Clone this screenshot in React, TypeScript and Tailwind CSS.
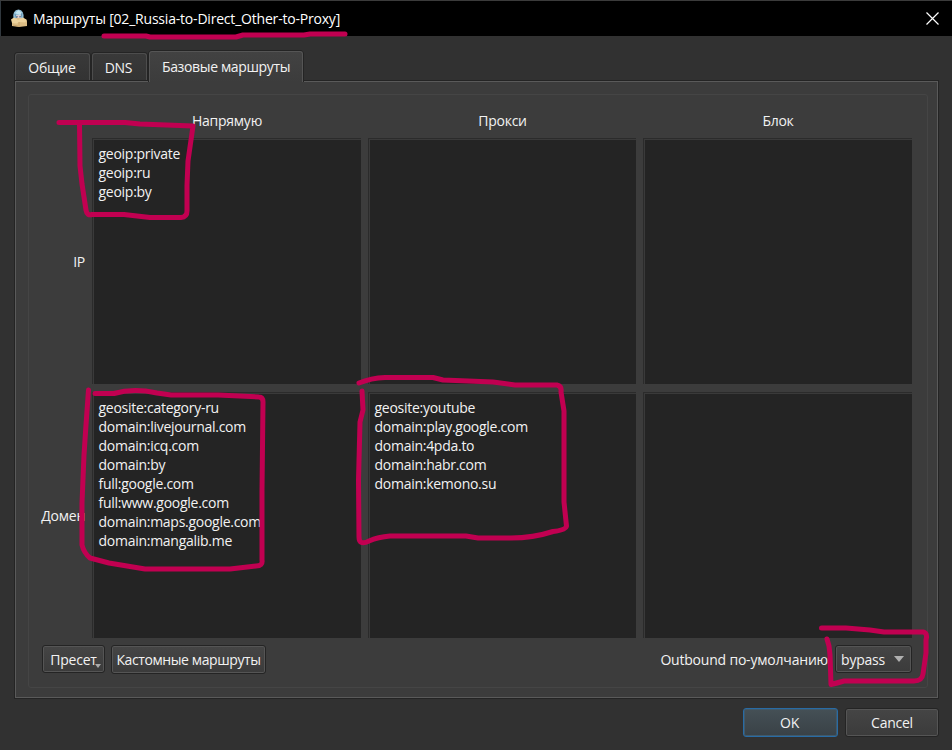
const direct = ["geoip:private", "geoip:ru", "geoip:by"];
const directDomains = [
  "geosite:category-ru",
  "domain:livejournal.com",
  "domain:icq.com",
  "domain:by",
  "full:google.com",
  "full:www.google.com",
  "domain:maps.google.com",
  "domain:mangalib.me",
];
const proxyDomains = [
  "geosite:youtube",
  "domain:play.google.com",
  "domain:4pda.to",
  "domain:habr.com",
  "domain:kemono.su",
];

function TextBox({ lines = [] }: { lines?: string[] }) {
  return (
    <div className="h-full overflow-hidden border border-r-0 border-b-0 border-[#2b2b2b] bg-[#242424]">
      <div className="h-full border-t border-l border-[#3a3a3a] pt-[4px] pl-[4.5px] tracking-[-0.27px]">
        {lines.map((line) => (
          <div key={line} className="h-[19px] whitespace-nowrap leading-[19px]">
            {line}
          </div>
        ))}
      </div>
    </div>
  );
}

const button =
  "flex items-center justify-center whitespace-nowrap rounded-[3px] border border-[#242424] bg-gradient-to-b from-[#454545] to-[#3b3b3b] shadow-[inset_0_0_0_1px_#555555]";

const inactiveTab =
  "flex h-[27px] items-center justify-center rounded-t-[3px] border border-b-0 border-[#4d4d4d] bg-gradient-to-b from-[#393939] to-[#333333] shadow-[0_0_0_1px_#242424]";

function TitleIcon() {
  return (
    <svg width="18" height="20" viewBox="0 0 18 20">
      <path d="M3.500 10 Q2 1 8.500 .5 Q14.500 1 13.500 10Z" fill="#8ebbd4" />
      <path d="M5 4 L8.500 1 L12 4 L10 6 L7 5Z" fill="#c1e2ed" />
      <path d="M6 6 H11 V10 H6Z" fill="#d9cdd0" />
      <path d="M5 5 L6.500 9 M12 4 L11 8" stroke="#6494b1" strokeWidth="1" />
      <path d="M6.500 7 h1 v1.500 h-1z M9.500 7 h1 v1.500 h-1z" fill="#485a76" />
      <path d="M2 10 L8 9 L15 10 L17 12 V17 L9 18 L2 17Z" fill="#dcbd85" />
      <path d="M1 10.500 L4 8.500 L8 11 L13 8.500 L17 11 L15 13.500 L9 13 L7 14.500 L2 14Z" fill="#edd39d" />
      <path d="M9 13 V18 M3 16 L8 17" stroke="#c39c62" strokeWidth=".7" />
    </svg>
  );
}

export default function App() {
  return (
    <div className="relative flex h-[750px] w-[952px] flex-col overflow-hidden border-t border-[#3b3b3b] bg-[#313131] font-['Open_Sans','Noto_Sans',sans-serif] text-[14px] tracking-[-0.25px] text-[#f2f2f2]">
      <header className="flex h-[35px] shrink-0 items-center border-l border-[#30373d] bg-black pr-[13px] pl-[9px]">
        <TitleIcon />
        <h1 className="ml-[5px] text-[14px] tracking-[-0.2px] whitespace-nowrap text-white">
          Маршруты [02_Russia-to-Direct_Other-to-Proxy]
        </h1>
        <svg className="ml-auto" width="13" height="13" viewBox="0 0 13 13" stroke="#fff" strokeWidth="1.2">
          <path d="M.5 .5 L12.5 12.5 M12.5 .5 L.5 12.5" />
        </svg>
      </header>

      <nav className="relative z-10 flex h-[44px] shrink-0 items-end gap-[2px] pl-[15px]">
        <div className={`${inactiveTab} w-[75px] pr-px`}>Общие</div>
        <div className={`${inactiveTab} w-[55px] pr-[2px]`}>DNS</div>
        <div className="-mb-[2px] flex h-[31px] w-[154px] items-center justify-center rounded-t-[3px] border border-b-0 border-[#555555] bg-gradient-to-b from-[#424242] to-[#3c3c3c] pb-[2px] tracking-[-0.36px] shadow-[-1px_0_0_#242424,1px_0_0_#242424,0_-1px_0_#242424]">
          Базовые маршруты
        </div>
      </nav>

      <main className="ml-[14px] h-[619px] w-[925px] shrink-0 border border-[#242424]">
        <div className="h-full border border-[#5a5a5a] bg-[#3c3c3c] pt-[12px] pl-[12px]">
          <section className="flex h-[594px] w-[900px] flex-col rounded-[3px] border border-[#454545] pt-[13px] pr-[15px] pl-[10px]">
            <div className="grid grid-cols-[46px_269px_268px_269px] gap-x-[7px] pb-[5px] text-center leading-[25px]">
              <span />
              <span className="pl-px">Напрямую</span>
              <span className="pl-px">Прокси</span>
              <span className="pl-px">Блок</span>
            </div>
            <div className="grid shrink-0 grid-cols-[46px_269px_268px_269px] grid-rows-[246px_246px] gap-x-[7px] gap-y-[8px]">
              <div className="flex items-center justify-end">IP</div>
              <TextBox lines={direct} />
              <TextBox />
              <TextBox />
              <div className="flex items-center justify-end">Домен</div>
              <TextBox lines={directDomains} />
              <TextBox lines={proxyDomains} />
              <TextBox />
            </div>
            <div className="mt-[7px] flex items-start pl-[3px]">
              <button className={`${button} relative h-[28px] w-[63px]`}>
                Пресет
                <svg className="absolute right-[3px] bottom-[4px]" width="6" height="4" viewBox="0 0 6 4">
                  <path d="M0 0 H6 L3 4Z" fill="#aaa" />
                </svg>
              </button>
              <button className={`${button} ml-[6px] h-[29px] w-[155px] tracking-[-0.4px]`}>Кастомные маршруты</button>
              <span className="ml-auto leading-[29px] tracking-[-0.2px] whitespace-nowrap">Outbound по-умолчанию</span>
              <button className={`${button} ml-[7px] h-[28px] w-[77px] gap-[9px] pr-[2px]`}>
                bypass
                <svg width="10" height="6" viewBox="0 0 10 6">
                  <path d="M0 0 H10 L5 6Z" fill="#b0b0b0" />
                </svg>
              </button>
            </div>
          </section>
        </div>
      </main>

      <footer className="flex justify-end gap-[7px] pt-[9px] pr-[13px]">
        <button className="flex h-[29px] w-[95px] items-center justify-center rounded-[3px] border border-[#286ba5] bg-gradient-to-b from-[#455056] to-[#394146] pr-[2px] shadow-[inset_0_0_0_1px_#40596a]">
          OK
        </button>
        <button className={`${button} h-[29px] w-[94px]`}>Cancel</button>
      </footer>

      {/* Hand-drawn marker annotations over the dialog */}
      <svg
        className="pointer-events-none absolute -top-px left-0 z-20"
        width="952"
        height="750"
        viewBox="0 0 952 750"
        fill="none"
        stroke="#c10051"
        strokeWidth="5"
        strokeLinecap="round"
        strokeLinejoin="round"
      >
        <path d="M104 36 H146 L150 37 H236 L243 35 H304 L310 34 H345" />
        <path d="M59 122.500 H125 L140 124 L193 126 L188 161 L187 185 V211 Q187 217 181 217.500 H150 L137 216 L124 214.500 H92 Q87 216 86 210 L82 184 L80 166 L79.500 124" />
        <path d="M95 393.500 H114 Q133 388 157 393 L171 395 H218 L259 397 Q263 397 263 402 L262 491 V560 Q263 566 256 566 L230 569 H145 L109 563 L90 558 Q84 553 82 545 V503 L84 455 L86 425 L88.500 390" />
        <path d="M359 383 Q371 378 385 377.500 H433 L443 380 L493 382 L515 385 H557 Q562 386 561 392 L564 411 L564 502 L566.500 526 Q566 530 553 531.500 Q533 538 511 538 H478 L466 536 H390 Q378 537 369 541 Q359 546 359 537 L358.500 480 L360 422 L363 410 L362 391" />
        <path d="M821.500 628 H846 L870 630 L884 632 H923 Q928 633 926 640 L926 653 L923 674 Q922 681 914 681 H844 Q837 683 831 684.500 L830 655 L829 646 L827 639" />
      </svg>
    </div>
  );
}
